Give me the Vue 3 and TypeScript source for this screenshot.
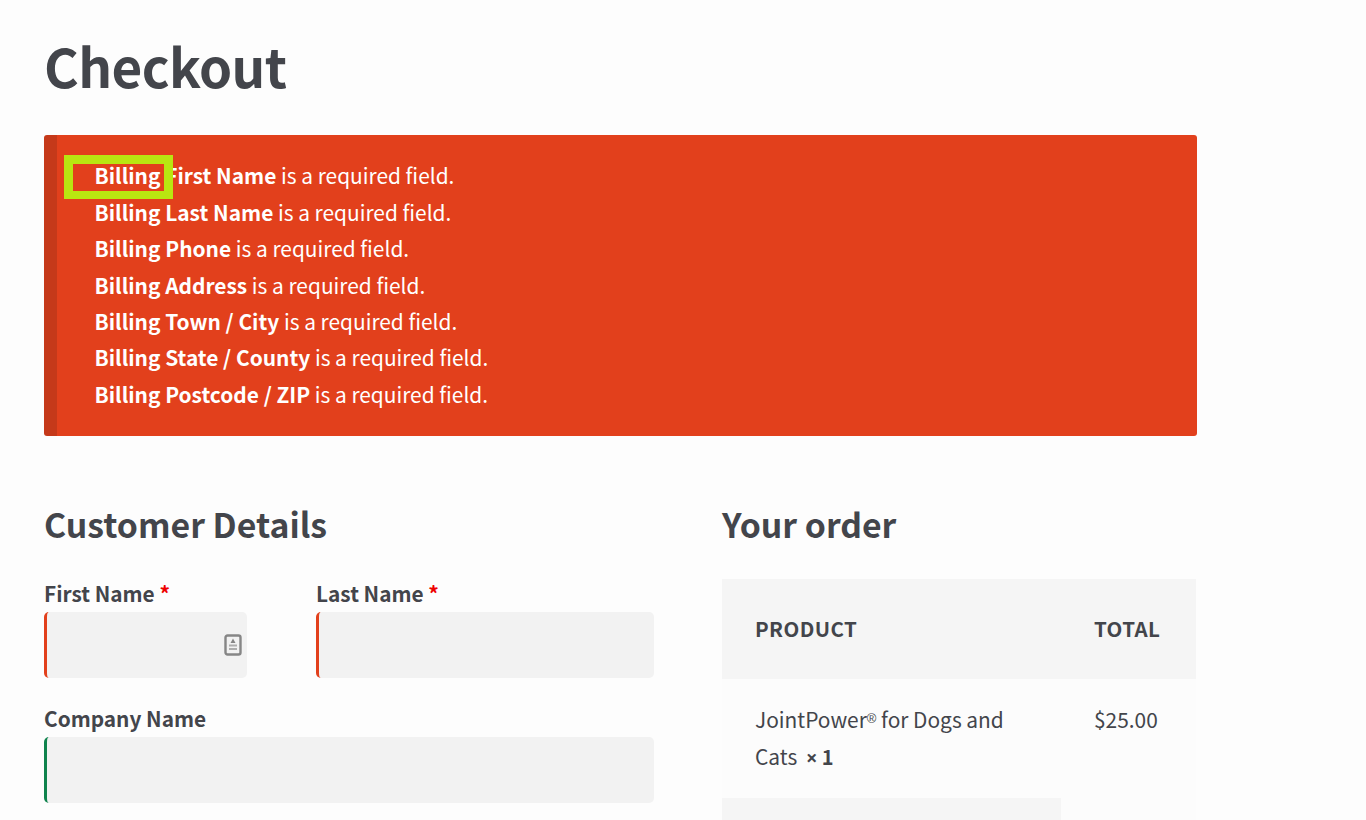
<template>
  <div class="page">
    <h1 class="title">Checkout</h1>

    <div class="notice">
      <ul class="errors">
        <li v-for="err in errors" :key="err"><strong>{{ err }}</strong> is a required field.</li>
      </ul>
      <div class="highlight"></div>
    </div>

    <div class="columns">
      <section class="customer">
        <h2>Customer Details</h2>
        <div class="name-row">
          <div class="field first">
            <label>First Name <abbr>*</abbr></label>
            <div class="input invalid">
              <svg class="contact-icon" width="18" height="22" viewBox="0 0 18 22">
                <rect x="1.500" y="1.500" width="15" height="19" rx="2" fill="none" stroke="#868686" stroke-width="2.400" />
                <path d="M9 4.500l2.500 4.500h-5z" fill="#858585" />
                <path d="M5 11.500h8M5 15h8" stroke="#adadad" stroke-width="2" />
              </svg>
            </div>
          </div>
          <div class="field last">
            <label>Last Name <abbr>*</abbr></label>
            <div class="input invalid"></div>
          </div>
        </div>
        <div class="field company">
          <label>Company Name</label>
          <div class="input valid"></div>
        </div>
      </section>

      <section class="order">
        <h2>Your order</h2>
        <table>
          <thead>
            <tr>
              <th class="col-name">PRODUCT</th>
              <th class="col-total">TOTAL</th>
            </tr>
          </thead>
          <tbody>
            <tr class="item">
              <td>JointPower<span class="reg">®</span> for Dogs and Cats <span class="qty"><span class="times">×</span> 1</span></td>
              <td>$25.00</td>
            </tr>
            <tr class="sub">
              <th></th>
              <td></td>
            </tr>
          </tbody>
        </table>
      </section>
    </div>
  </div>
</template>

<script setup lang="ts">
const errors: string[] = [
  'Billing First Name',
  'Billing Last Name',
  'Billing Phone',
  'Billing Address',
  'Billing Town / City',
  'Billing State / County',
  'Billing Postcode / ZIP',
]
</script>

<style>
html,
body {
  background: #fdfdfd;
  overflow: hidden;
}
</style>

<style scoped>
.page {
  width: 1153px;
  height: 820px;
  overflow: hidden;
  margin-left: 44px;
  font-family: "Noto Sans CJK SC", "Open Sans", sans-serif;
  color: #43454b;
  font-size: 20.900px;
}
.title {
  margin: 0;
  padding-top: 29px;
  height: 135px;
  box-sizing: border-box;
  font-size: 53px;
  line-height: 72px;
  font-weight: 700;
  letter-spacing: -0.6px;
}
.notice {
  position: relative;
  height: 301px;
  box-sizing: border-box;
  background: #e2401c;
  border-left: 13px solid #c5391a;
  border-radius: 3px;
  padding: 22.400px 0 0 37.500px;
  color: #fff;
}
.errors {
  list-style: none;
  margin: 0;
  padding: 0;
  line-height: 36.400px;
}
.errors strong {
  font-weight: 700;
}
.highlight {
  position: absolute;
  left: 7px;
  top: 20px;
  width: 91px;
  height: 27px;
  border: solid #b9e611;
  border-width: 9px 9px 8px;
}
.columns {
  display: grid;
  grid-template-columns: 610px 474px;
  column-gap: 68px;
  padding-top: 66px;
}
h2 {
  margin: 0;
  font-size: 33.800px;
  line-height: 44px;
  font-weight: 700;
}
.name-row {
  display: flex;
  gap: 69px;
  margin-top: 32px;
}
.first {
  width: 203px;
}
.last {
  width: 338px;
}
.field label {
  display: block;
  font-size: 20.800px;
  line-height: 30px;
  font-weight: 700;
}
abbr {
  color: #e00;
  text-decoration: none;
}
.input {
  position: relative;
  height: 66px;
  margin-top: 4px;
  box-sizing: border-box;
  background: #f2f2f2;
  border-radius: 5px;
  border-left: 3px solid transparent;
  display: flex;
  align-items: center;
  justify-content: flex-end;
  padding-right: 5px;
}
.invalid {
  border-left-color: #e2401c;
}
.valid {
  border-left-color: #0f834d;
}
.company {
  margin-top: 25px;
}
.order table {
  width: 474px;
  margin-top: 33px;
  border-collapse: collapse;
  table-layout: fixed;
}
.order th,
.order td {
  padding: 0 33px;
  text-align: left;
  vertical-align: top;
  font-size: 20.900px;
}
thead th {
  height: 100px;
  vertical-align: middle !important;
  padding-bottom: 2px !important;
  box-sizing: border-box;
  background: #f5f5f5;
  font-weight: 700;
  font-size: 20.500px !important;
  letter-spacing: 0.4px;
}
.col-name {
  width: 339px;
}
.item td {
  height: 119px;
  box-sizing: border-box;
  padding-top: 22px !important;
  line-height: 37px;
  background: #fcfcfc;
}
.reg {
  font-family: "Liberation Sans", sans-serif;
  font-size: 13px;
  vertical-align: 5px;
  line-height: 0;
}
.qty {
  font-weight: 700;
  font-size: 20px;
  margin-left: 4px;
}
.times {
  font-family: "Open Sans", sans-serif;
}
.sub th {
  height: 100px;
  background: #f5f5f5;
}
.sub td {
  background: #fcfcfc;
}
</style>
